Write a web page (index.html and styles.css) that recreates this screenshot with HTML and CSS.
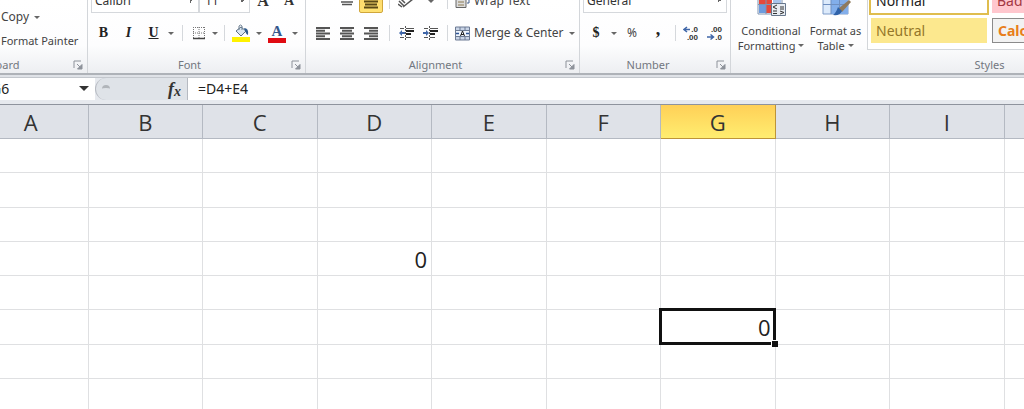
FILE: index.html
```html
<!DOCTYPE html>
<html lang="en">
<head>
<meta charset="utf-8">
<title>Spreadsheet</title>
<link rel="stylesheet" href="styles.css">
</head>
<body>
<svg class="defs" aria-hidden="true">
  <symbol id="launcher" viewBox="0 0 10 10"><path d="M1 8V1h7" fill="none" stroke="#8d929a"/><path d="M4 4l3 3M9 4.500v4.500H4.500z" fill="#8d929a" stroke="#8d929a"/></symbol>
  <symbol id="indent" viewBox="0 0 16 16"><path d="M6.500 1v14" stroke="#555" stroke-dasharray="2 1"/><path d="M1 3.500h4M1 12.500h4M7 3.500h8M7 12.500h5" stroke="#555"/><path d="M7 6h8M7 9h5" stroke="#222" stroke-width="2"/></symbol>
</svg>
<header class="ribbon">
  <section class="group clipboard">
    <div class="tools stack">
      <button class="text-btn">Copy <i class="caret"></i></button>
      <button class="text-btn small">Format Painter</button>
    </div>
    <footer><span>Clipboard</span><button class="launch" aria-label="Clipboard options"><svg><use href="#launcher"/></svg></button></footer>
  </section>

  <section class="group font">
    <div class="tools">
      <div class="row">
        <select class="combo face" aria-label="Font"><option>Calibri</option></select>
        <select class="combo size" aria-label="Font size"><option>11</option></select>
        <button class="tool grow" aria-label="Grow font">A</button>
        <button class="tool shrink" aria-label="Shrink font">A</button>
      </div>
      <div class="row">
        <button class="tool serif bold">B</button>
        <button class="tool serif italic">I</button>
        <button class="tool serif underline">U</button>
        <button class="drop" aria-label="Underline styles"><i class="caret"></i></button>
        <i class="sep"></i>
        <button class="tool borders" aria-label="Borders"><svg width="14" height="14" viewBox="0 0 14 14"><path d="M1.500 1v11M7 1v11M12.500 1v11M1 1.500h12M1 7h12" fill="none" stroke="#777" stroke-dasharray="1 1"/><path d="M1 12.500h12" stroke="#444" stroke-width="1.500"/></svg></button>
        <button class="drop" aria-label="Border styles"><i class="caret"></i></button>
        <i class="sep short"></i>
        <button class="tool" aria-label="Fill color"><svg width="18" height="18" viewBox="0 0 18 18"><path d="M4 7l5-4 5 4-5 5z" fill="#d8e5f1" stroke="#5e7184"/><path d="M7 6V2q1.500-2 3 0v4" fill="none" stroke="#6d7f91"/><path d="M12 4q5 0 4 7-2-1-3-4z" fill="#2f5b8d"/><path d="M0 13h18v5H0z" fill="#fff200"/></svg></button>
        <button class="drop" aria-label="Fill colors"><i class="caret"></i></button>
        <button class="tool fontcolor" aria-label="Font color"><span>A</span></button>
        <button class="drop" aria-label="Font colors"><i class="caret"></i></button>
      </div>
    </div>
    <footer><span>Font</span><button class="launch" aria-label="Font options"><svg><use href="#launcher"/></svg></button></footer>
  </section>

  <section class="group align">
    <div class="tools">
      <div class="row">
        <button class="tool" aria-label="Top align"></button>
        <button class="tool" aria-label="Middle align"><svg width="14" height="16" viewBox="0 0 14 16"><path d="M1 6h12M1 9h12M2 11.500h10" stroke="#555" stroke-width="1.500"/></svg></button>
        <button class="tool active" aria-label="Bottom align"><svg width="14" height="18" viewBox="0 0 14 18"><path d="M0 9.500h14M1 12.500h12M0 15.500h14" stroke="#5b4a17" stroke-width="2"/></svg></button>
        <i class="sep"></i>
        <button class="tool" aria-label="Orientation"><svg width="18" height="16" viewBox="0 0 18 16"><path d="M1 8l5 5M0 11l4 3M3 6l4 4M5 14l10-8" fill="none" stroke="#555" stroke-width="1.500"/></svg></button>
        <button class="drop wide" aria-label="Orientations"><i class="caret"></i></button>
        <i class="sep short"></i>
        <button class="text-btn icon-btn"><svg width="15" height="15" viewBox="0 0 15 15"><path d="M1 1h10v12.500H1z" fill="#ddd" stroke="#666"/><path d="M3 8h6M3 11h6" stroke="#8c7a52"/><path d="M12 9h2v-3" stroke="#3c5a8c" fill="none"/></svg>Wrap Text</button>
      </div>
      <div class="row">
        <button class="tool" aria-label="Align left"><svg width="14" height="13" viewBox="0 0 14 13"><path d="M0 1h14M0 6.500h14M0 12h14M0 3.800h9M0 9.300h9" stroke="#555" stroke-width="1.900"/></svg></button>
        <button class="tool" aria-label="Align center"><svg width="14" height="13" viewBox="0 0 14 13"><path d="M0 1h14M0 6.500h14M0 12h14M2 3.800h10M2 9.300h10" stroke="#555" stroke-width="1.900"/></svg></button>
        <button class="tool" aria-label="Align right"><svg width="14" height="13" viewBox="0 0 14 13"><path d="M0 1h14M0 6.500h14M0 12h14M5 3.800h9M5 9.300h9" stroke="#555" stroke-width="1.900"/></svg></button>
        <i class="sep"></i>
        <button class="tool" aria-label="Decrease indent"><svg width="16" height="16"><use href="#indent"/><path d="M0 8l3-3v2h3v2H3v2z" fill="#3f66a8"/></svg></button>
        <button class="tool" aria-label="Increase indent"><svg width="16" height="16"><use href="#indent"/><path d="M6 8L3 5v2H0v2h3v2z" fill="#3f66a8"/></svg></button>
        <i class="sep short"></i>
        <button class="text-btn icon-btn"><svg width="15" height="15" viewBox="0 0 15 15"><path d="M.5 1h14v13H.5z" fill="#c9d4e6" stroke="#6d7b94"/><path d="M1 4.500h13M1 10.500h13M5 1v3M10 1v3M5 11v3M10 11v3" stroke="#6d7b94"/><path d="M1 5h13v5H1z" fill="#eef4fc"/><path d="M1 7.500h3M14 7.500h-3" stroke="#2f5597" stroke-width="1.500"/><path d="M5.500 10l2-5 2 5M6 8.500h3" fill="none" stroke="#222"/></svg>Merge &amp; Center <i class="caret"></i></button>
      </div>
    </div>
    <footer><span>Alignment</span><button class="launch" aria-label="Alignment options"><svg><use href="#launcher"/></svg></button></footer>
  </section>

  <section class="group number">
    <div class="tools">
      <div class="row"><select class="combo format" aria-label="Number format"><option>General</option></select></div>
      <div class="row">
        <button class="tool serif bold">$</button>
        <button class="drop" aria-label="Currencies"><i class="caret"></i></button>
        <button class="tool">%</button>
        <button class="tool serif comma">,</button>
        <i class="sep short"></i>
        <button class="tool decimal" aria-label="Increase decimal"><svg width="16" height="16" viewBox="0 0 16 16"><path d="M1 4.500h6M4 2L1 4.500 4 7" fill="none" stroke="#3f66a8" stroke-width="1.500"/><text x="15" y="7" text-anchor="end">.0</text><text x="15" y="15" text-anchor="end">.00</text></svg></button>
        <button class="tool decimal" aria-label="Decrease decimal"><svg width="16" height="16" viewBox="0 0 16 16"><path d="M0 12h6M3.500 9.500l3 2.500-3 2.500" fill="none" stroke="#3f66a8" stroke-width="1.500"/><text x="15" y="7" text-anchor="end">.00</text><text x="15" y="15" text-anchor="end">.0</text></svg></button>
      </div>
    </div>
    <footer><span>Number</span><button class="launch" aria-label="Number options"><svg><use href="#launcher"/></svg></button></footer>
  </section>

  <section class="group styles">
    <div class="tools gallery-row">
      <button class="big"><svg width="30" height="32" viewBox="0 0 30 32"><path d="M2 1h24v26H2z" fill="#fff" stroke="#7f93b0"/><path d="M3 8h13v9H3z" fill="#e5493a"/><path d="M3 18h7v8H3z" fill="#6d9bdd"/><path d="M10 18h6v8h-6z" fill="#e5493a"/><path d="M17 8h8v9h-8z" fill="#a9c5ec"/><path d="M2 17.500h24M10 1v26" stroke="#7f93b0"/><path d="M15.500 16.500h14v12h-14z" fill="#e8edf3" stroke="#67778c"/><path d="M21 18l-4 2 4 2M17 24h4M17 26.500h4M24 20h4M24 22h4M24 24l4 1.500-4 1.500" fill="none" stroke="#333"/></svg><span>Conditional<br>Formatting <i class="caret"></i></span></button>
      <button class="big"><svg width="30" height="32" viewBox="0 0 30 32"><path d="M2 1h25v26H2z" fill="#dceafb" stroke="#7f9cc8"/><path d="M10 8h17v19H10z" fill="#82aeea"/><path d="M2 8.500h25M2 17.500h25M10 1v26M18.500 1v26" stroke="#6f8fc0"/><path d="M28 13l2 2-9 10-4-3z" fill="#8f7a5d"/><path d="M17 20l4 4q-2 5-9 4 3-2 5-8z" fill="#2f62a8"/></svg><span>Format as<br>Table <i class="caret"></i></span></button>
      <div class="gallery">
        <button class="style normal">Normal</button>
        <button class="style bad">Bad</button>
        <button class="style neutral">Neutral</button>
        <button class="style calc">Calculation</button>
      </div>
    </div>
    <footer><span>Styles</span></footer>
  </section>
</header>

<div class="formula-bar">
  <div class="name-box"><input aria-label="Name box" value="G6"><button aria-label="Names"><svg width="10" height="6"><path d="M0 0h10L5 5z" fill="#333"/></svg></button></div>
  <div class="fx-area"><i class="knob"></i><button class="fx" aria-label="Insert function">f<sub>x</sub></button></div>
  <input class="formula" aria-label="Formula" value="=D4+E4">
</div>

<main class="sheet">
  <table>
    <thead><tr><th>A</th><th>B</th><th>C</th><th>D</th><th>E</th><th>F</th><th class="current">G</th><th>H</th><th>I</th><th>J</th></tr></thead>
    <tbody>
      <tr><td></td><td></td><td></td><td></td><td></td><td></td><td></td><td></td><td></td><td></td></tr>
      <tr><td></td><td></td><td></td><td></td><td></td><td></td><td></td><td></td><td></td><td></td></tr>
      <tr><td></td><td></td><td></td><td></td><td></td><td></td><td></td><td></td><td></td><td></td></tr>
      <tr><td></td><td></td><td></td><td>0</td><td></td><td></td><td></td><td></td><td></td><td></td></tr>
      <tr><td></td><td></td><td></td><td></td><td></td><td></td><td></td><td></td><td></td><td></td></tr>
      <tr><td></td><td></td><td></td><td></td><td></td><td></td><td class="selected">0</td><td></td><td></td><td></td></tr>
      <tr><td></td><td></td><td></td><td></td><td></td><td></td><td></td><td></td><td></td><td></td></tr>
      <tr><td></td><td></td><td></td><td></td><td></td><td></td><td></td><td></td><td></td><td></td></tr>
    </tbody>
  </table>
</main>
</body>
</html>
```
FILE: styles.css
```css
* { box-sizing: border-box; }
html, body { overflow: hidden; }
body {
  margin: 0;
  background: #dfe2e7;
  color: #444;
  font: 12px/16px "Noto Sans", sans-serif;
}
button, input, select {
  margin: 0;
  padding: 0;
  border: 0;
  background: none;
  color: inherit;
  font: inherit;
  appearance: none;
}
svg { display: block; flex: none; }
.defs { position: absolute; width: 0; height: 0; }

.ribbon {
  display: flex;
  height: 75px;
  overflow: hidden;
  background: linear-gradient(#fff 0, #fdfdfe 45px, #eceef1 74px);
  border-bottom: 2px solid #aeb2b8;
}
.group {
  display: flex;
  flex: none;
  flex-direction: column;
  justify-content: flex-end;
  border-right: 1px solid #d3d6da;
}
.clipboard { width: 172px; margin-left: -84px; }
.font { width: 218px; }
.align { width: 274px; }
.number { width: 151px; }
.styles { width: 522px; }
.tools { display: flex; flex-direction: column; gap: 8px; padding: 0 3px 11px; }
.align .tools { padding-left: 5px; }
.row { display: flex; align-items: center; height: 24px; }
.group footer {
  display: flex;
  flex: none;
  align-items: center;
  height: 17px;
  padding-right: 4px;
  color: #72777f;
  font-size: 11px;
}
.group footer span { flex: 1; text-align: center; }
.launch { width: 10px; height: 10px; }
.launch svg { width: 10px; height: 10px; }

.stack { gap: 0; padding: 0 0 3px 85px; align-items: flex-start; }
.text-btn { display: flex; align-items: center; height: 24px; white-space: nowrap; }
.text-btn .caret { margin-left: 5px; }
.small { font-size: 11px; }
.icon-btn { gap: 4px; padding-left: 4px; }
.icon-btn .caret { margin-left: 1px; }
.caret {
  display: inline-block;
  width: 0;
  height: 0;
  border: 3px solid transparent;
  border-top-color: #666;
  border-bottom: 0;
  vertical-align: 3px;
}
.tool {
  display: flex;
  flex: none;
  align-items: center;
  justify-content: center;
  width: 24px;
  height: 24px;
}
.font .tool, .number .tool { width: 26px; }
.font .serif { width: 25px; }
.font .borders { width: 22px; }
.number .decimal { width: 24px; }
.drop { display: flex; align-items: center; justify-content: center; width: 10px; height: 24px; }
.drop.wide { width: 24px; }
.sep { width: 12px; height: 16px; background: linear-gradient(#d5d8dc, #d5d8dc) center / 1px 100% no-repeat; }
.sep.short { width: 8px; }
.serif { color: #222; font: bold 14px/16px "Liberation Serif", serif; }
.italic { font-style: italic; }
.underline { text-decoration: underline; }
.number .comma { padding-bottom: 9px; font-size: 18px; }
.grow, .shrink { color: #333; font: bold 16px/20px "Liberation Serif", serif; }
.shrink { font-size: 14px; }
.fontcolor span {
  width: 18px;
  border-bottom: 5px solid #e00b12;
  color: #35588d;
  font: bold 15px/14px "Liberation Serif", serif;
  text-align: center;
}
.decimal text { fill: #333; font: bold 8px "Liberation Sans", sans-serif; }
.active { height: 24px; border: 1px solid #d0a63a; border-radius: 2px; background: linear-gradient(#fdd567, #ffe272); }

.combo {
  height: 24px;
  padding-left: 3px;
  border: 1px solid #d5d8dc;
  background: #fff linear-gradient(135deg, #666 50%, transparent 50%) right 5px center / 3px 3px no-repeat;
  color: #333;
}
.face { width: 110px; }
.size { width: 52px; padding-left: 5px; }
.format { width: 144px; }

.gallery-row { flex-direction: row; align-items: flex-end; gap: 0; padding: 0 0 3px 7px; }
.big {
  display: flex;
  flex-direction: column;
  align-items: center;
  gap: 4px;
  width: 66px;
  font-size: 11px;
  line-height: 15px;
  white-space: nowrap;
}
.big + .big { width: 63px; }
.gallery {
  display: grid;
  grid-template-columns: 116px 116px;
  grid-auto-rows: 25px;
  gap: 5px;
  margin-bottom: 3px;
  padding: 3px 4px 6px 3px;
  border: 1px solid #d3d6da;
  background: #fff;
}
.style { padding-left: 5px; text-align: left; font-size: 14px; line-height: 18px; }
.normal { outline: 2px solid #dfbd4e; color: #222; }
.bad { background: #ffc7ce; color: #a33843; }
.neutral { background: #fce88e; color: #947629; }
.calc { border: 1px solid #8b8b8b; background: #f2f2f2; color: #e87e1b; font-weight: bold; }

.formula-bar {
  display: flex;
  height: 28px;
  margin-top: 2px;
  padding: 0 0 4px;
  border-top: 1px solid #c3c7cd;
  border-bottom: 1px solid #8e939d;
  background: #e6e9ee;
  color: #222;
  font-size: 14px;
}
.name-box { display: flex; flex: none; align-items: center; width: 95px; background: #fff; }
.name-box input { width: 79px; margin-left: -9px; }
.name-box button { margin-left: 9px; }
.fx-area {
  display: flex;
  flex: none;
  align-items: center;
  justify-content: space-between;
  width: 93px;
  padding: 0 6px;
  border: 1px solid #b6bac1;
  border-width: 0 1px;
  border-radius: 12px 0 0 12px;
  background: #dfe3e8;
}
.knob { width: 8px; height: 8px; border-top: 3px solid #b1b5ba; border-radius: 4px; }
.fx { color: #333; font: italic bold 18px/18px "Liberation Serif", serif; }
.fx sub { font-size: 14px; line-height: 0; vertical-align: -1px; }
.formula { flex: 1; min-width: 0; padding-left: 10px; background: #fff; }

.sheet { overflow: hidden; background: #fff; }
table {
  width: 1145px;
  margin-left: -26px;
  border-collapse: separate;
  border-spacing: 0;
  table-layout: fixed;
  color: #222;
  font: 22px/28px "Open Sans", "Noto Sans", sans-serif;
}
th, td { height: 34px; padding: 0 4px; border: 1px solid #dfe0e2; border-width: 0 1px 1px 0; }
th { border-color: #b4b9c2; background: #dfe2e8; color: #333; font-weight: normal; }
th.current { border-color: #bd9438; background: linear-gradient(#ffd057, #ffed70); }
td { text-align: right; }
tbody tr:nth-child(4n + 2) td { height: 35px; }
.selected { position: relative; }
.selected::before { content: ""; position: absolute; inset: -2px -1px -1px -2px; border: 3px solid #111; }
.selected::after { content: ""; position: absolute; right: -3px; bottom: -3px; width: 6px; height: 6px; border: 1px solid #fff; border-width: 1px 0 0 1px; background: #111; }
```
